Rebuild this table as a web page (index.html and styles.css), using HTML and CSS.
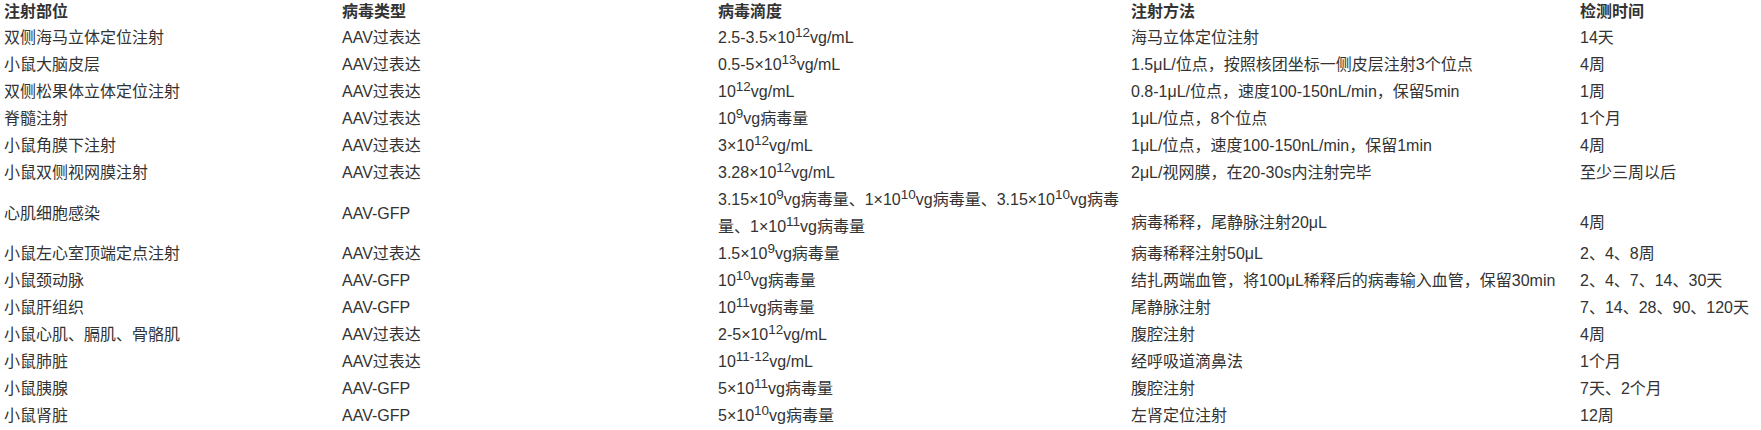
FILE: index.html
```html
<!DOCTYPE html>
<html lang="zh">
<head>
<meta charset="utf-8">
<title>注射部位</title>
<link rel="stylesheet" href="styles.css">
</head>
<body>
<table class="data">
  <colgroup>
    <col class="c1"><col class="c2"><col class="c3"><col class="c4"><col class="c5">
  </colgroup>
  <thead>
    <tr><th>注射部位</th><th>病毒类型</th><th>病毒滴度</th><th>注射方法</th><th>检测时间</th></tr>
  </thead>
  <tbody>
    <tr><td>双侧海马立体定位注射</td><td>AAV过表达</td><td>2.5-3.5×10<sup>12</sup>vg/mL</td><td>海马立体定位注射</td><td>14天</td></tr>
    <tr><td>小鼠大脑皮层</td><td>AAV过表达</td><td>0.5-5×10<sup>13</sup>vg/mL</td><td>1.5μL/位点，按照核团坐标一侧皮层注射3个位点</td><td>4周</td></tr>
    <tr><td>双侧松果体立体定位注射</td><td>AAV过表达</td><td>10<sup>12</sup>vg/mL</td><td>0.8-1μL/位点，速度100-150nL/min，保留5min</td><td>1周</td></tr>
    <tr><td>脊髓注射</td><td>AAV过表达</td><td>10<sup>9</sup>vg病毒量</td><td>1μL/位点，8个位点</td><td>1个月</td></tr>
    <tr><td>小鼠角膜下注射</td><td>AAV过表达</td><td>3×10<sup>12</sup>vg/mL</td><td>1μL/位点，速度100-150nL/min，保留1min</td><td>4周</td></tr>
    <tr><td>小鼠双侧视网膜注射</td><td>AAV过表达</td><td>3.28×10<sup>12</sup>vg/mL</td><td>2μL/视网膜，在20-30s内注射完毕</td><td>至少三周以后</td></tr>
    <tr><td>心肌细胞感染</td><td>AAV-GFP</td><td class="nowrap">3.15×10<sup>9</sup>vg病毒量、1×10<sup>10</sup>vg病毒量、3.15×10<sup>10</sup>vg病毒<br>量、1×10<sup>11</sup>vg病毒量</td><td class="low">病毒稀释，尾静脉注射20μL</td><td class="low">4周</td></tr>
    <tr><td>小鼠左心室顶端定点注射</td><td>AAV过表达</td><td>1.5×10<sup>9</sup>vg病毒量</td><td>病毒稀释注射50μL</td><td>2、4、8周</td></tr>
    <tr><td>小鼠颈动脉</td><td>AAV-GFP</td><td>10<sup>10</sup>vg病毒量</td><td>结扎两端血管，将100μL稀释后的病毒输入血管，保留30min</td><td>2、4、7、14、30天</td></tr>
    <tr><td>小鼠肝组织</td><td>AAV-GFP</td><td>10<sup>11</sup>vg病毒量</td><td>尾静脉注射</td><td>7、14、28、90、120天</td></tr>
    <tr><td>小鼠心肌、膈肌、骨骼肌</td><td>AAV过表达</td><td>2-5×10<sup>12</sup>vg/mL</td><td>腹腔注射</td><td>4周</td></tr>
    <tr><td>小鼠肺脏</td><td>AAV过表达</td><td>10<sup>11-12</sup>vg/mL</td><td>经呼吸道滴鼻法</td><td>1个月</td></tr>
    <tr><td>小鼠胰腺</td><td>AAV-GFP</td><td>5×10<sup>11</sup>vg病毒量</td><td>腹腔注射</td><td>7天、2个月</td></tr>
    <tr><td>小鼠肾脏</td><td>AAV-GFP</td><td>5×10<sup>10</sup>vg病毒量</td><td>左肾定位注射</td><td>12周</td></tr>
  </tbody>
</table>
</body>
</html>
```

FILE: styles.css
```css
html, body {
  margin: 0;
  padding: 0;
  background: #ffffff;
}

body {
  font-family: "Liberation Sans", "Noto Sans CJK SC", sans-serif;
  font-size: 16px;
  color: #333333;
}

.data {
  width: 1761px;
  table-layout: fixed;
  border-collapse: collapse;
}

.c1 { width: 338px; }
.c2 { width: 376px; }
.c3 { width: 413px; }
.c4 { width: 449px; }
.c5 { width: 185px; }

.data th {
  text-align: left;
  font-weight: bold;
  line-height: 24px;
  height: 24px;
  padding: 0 0 0 4px;
  vertical-align: middle;
}

.data td {
  line-height: 27px;
  padding: 0 0 0 4px;
  vertical-align: middle;
  white-space: nowrap;
}

.data td.nowrap {
  overflow: visible;
}

.data td.low {
  padding-top: 18px;
}

.data sup {
  font-size: 13.5px;
  line-height: 0;
  vertical-align: 0.45em;
}
```
